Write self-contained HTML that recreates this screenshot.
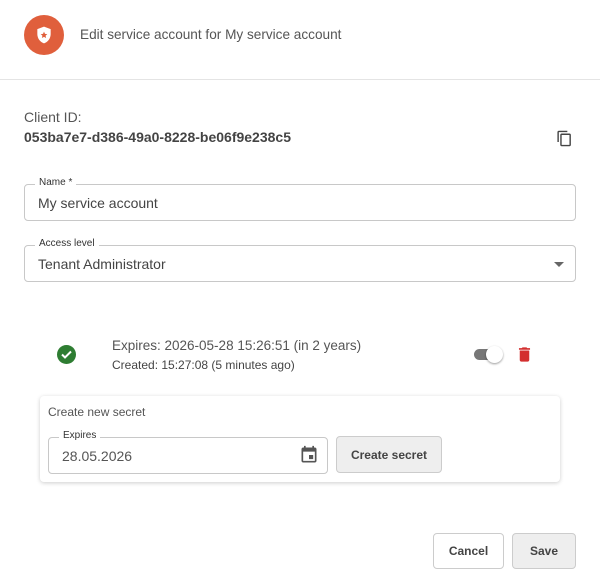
<!DOCTYPE html>
<html><head><style>
*{box-sizing:border-box;margin:0;padding:0}
body{width:600px;height:577px;background:#fff;font-family:"Liberation Sans",sans-serif;color:#444;position:relative;overflow:hidden}
.a{position:absolute}
.field{position:absolute;border:1px solid #c8c8c8;border-radius:4px;background:#fff}
.lbl{position:absolute;top:-8px;left:10px;background:#fff;padding:0 4px;font-size:10px;color:#333}
.btn{position:absolute;border:1px solid #ccc;border-radius:4px;font-size:12px;font-weight:bold;color:#444;display:flex;align-items:center;justify-content:center}
</style></head><body>
<div class="a" style="left:24px;top:15px;width:40px;height:40px;border-radius:50%;background:#e05f3c"></div>
<svg class="a" style="left:34px;top:25px" width="20" height="20" viewBox="0 0 24 24"><path d="M12 2L4 5v6c0 5 3.4 9.7 8 11 4.6-1.3 8-6 8-11V5z" fill="#fff"/><path d="M12 8l1.2 2.6 2.8.3-2.1 1.9.6 2.8L12 14.2 9.5 15.6l.6-2.8L8 10.9l2.8-.3z" fill="#e05f3c"/></svg>
<div class="a" style="left:80px;top:27px;font-size:13.6px;color:#555">Edit service account for My service account</div>
<div class="a" style="left:0;top:79px;width:600px;height:1px;background:#e4e4e4"></div>
<div class="a" style="left:24px;top:109px;font-size:14px;color:#555">Client ID:</div>
<div class="a" style="left:24px;top:129px;font-size:14px;font-weight:bold;color:#444">053ba7e7-d386-49a0-8228-be06f9e238c5</div>
<svg class="a" style="left:556px;top:130px" width="17" height="17" viewBox="0 0 24 24"><path d="M16 1H4c-1.1 0-2 .9-2 2v14h2V3h12V1zm3 4H8c-1.1 0-2 .9-2 2v14c0 1.1.9 2 2 2h11c1.1 0 2-.9 2-2V7c0-1.1-.9-2-2-2zm0 16H8V7h11v14z" fill="#444"/></svg>
<div class="field" style="left:24px;top:184px;width:552px;height:37px"><span class="lbl">Name *</span><div class="a" style="left:13px;top:10px;font-size:14px;color:#444">My service account</div></div>
<div class="field" style="left:24px;top:245px;width:552px;height:37px"><span class="lbl">Access level</span><div class="a" style="left:13px;top:10px;font-size:14px;color:#444">Tenant Administrator</div><div class="a" style="right:11px;top:16px;border:5px solid transparent;border-top:5px solid #666"></div></div>
<div class="a" style="left:57px;top:345px;width:19px;height:19px;border-radius:50%;background:#2e7d32"></div>
<svg class="a" style="left:57px;top:345px" width="19" height="19" viewBox="0 0 19 19"><path d="M5 9.5l3 3 6-6" stroke="#fff" stroke-width="2" fill="none"/></svg>
<div class="a" style="left:112px;top:338px;font-size:13.5px;color:#555">Expires: 2026-05-28 15:26:51 (in 2 years)</div>
<div class="a" style="left:112px;top:358px;font-size:12px;color:#444">Created: 15:27:08 (5 minutes ago)</div>
<div class="a" style="left:474px;top:349px;width:28px;height:11px;border-radius:6px;background:#777"></div>
<div class="a" style="left:486px;top:346px;width:17px;height:17px;border-radius:50%;background:#fff;box-shadow:0 1px 2px rgba(0,0,0,.4)"></div>
<svg class="a" style="left:515px;top:345px" width="19" height="19" viewBox="0 0 24 24"><path d="M6 19c0 1.1.9 2 2 2h8c1.1 0 2-.9 2-2V7H6v12zM19 4h-3.5l-1-1h-5l-1 1H5v2h14V4z" fill="#d32f2f"/></svg>
<div class="a" style="left:40px;top:396px;width:520px;height:86px;background:#fff;border-radius:4px;box-shadow:0 1px 4px rgba(0,0,0,.2)"></div>
<div class="a" style="left:48px;top:405px;font-size:12px;color:#555">Create new secret</div>
<div class="field" style="left:48px;top:437px;width:280px;height:37px"><span class="lbl">Expires</span><div class="a" style="left:13px;top:10px;font-size:14px;color:#555">28.05.2026</div>
<svg class="a" style="left:250px;top:7px" width="20" height="20" viewBox="0 0 24 24"><path d="M17 12h-5v5h5v-5zM16 1v2H8V1H6v2H5c-1.1 0-2 .9-2 2v14c0 1.1.9 2 2 2h14c1.1 0 2-.9 2-2V5c0-1.1-.9-2-2-2h-1V1h-2zm3 18H5V8h14v11z" fill="#555"/></svg></div>
<div class="btn" style="left:336px;top:436px;width:106px;height:37px;background:#eee">Create secret</div>
<div class="btn" style="left:433px;top:533px;width:71px;height:36px;background:#fff">Cancel</div>
<div class="btn" style="left:512px;top:533px;width:64px;height:36px;background:#eee">Save</div>
</body></html>
